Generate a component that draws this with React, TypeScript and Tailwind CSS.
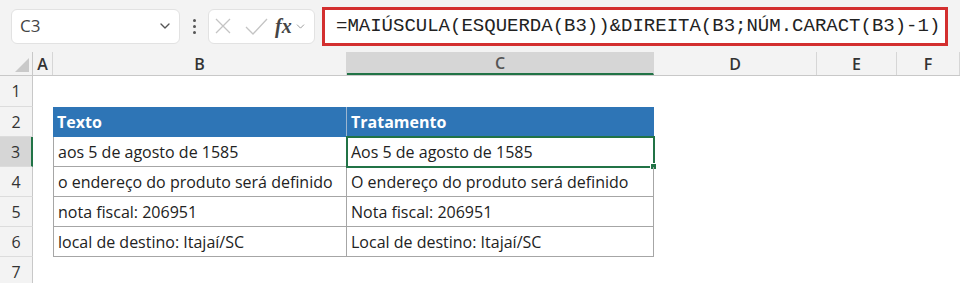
import { ChevronDown } from 'lucide-react';

const cols = [
  { key: 'A', w: 'w-[20px]' },
  { key: 'B', w: 'w-[294px]' },
  { key: 'C', w: 'w-[307px]' },
  { key: 'D', w: 'w-[163px]' },
  { key: 'E', w: 'w-[80px]' },
  { key: 'F', w: 'flex-1' },
];

const rows = [
  ['aos 5 de agosto de 1585', 'Aos 5 de agosto de 1585'],
  ['o endereço do produto será definido', 'O endereço do produto será definido'],
  ['nota fiscal: 206951', 'Nota fiscal: 206951'],
  ['local de destino: Itajaí/SC', 'Local de destino: Itajaí/SC'],
];

const cellFont = { fontFamily: '"Open Sans", "Noto Sans", sans-serif' };

function RowHeader({ n, h, active }: { n: number; h: string; active?: boolean }) {
  return (
    <div
      className={`w-[33px] ${h} flex items-center justify-center border-b border-[#dcdcdc] text-[16px] text-[#333] ${
        active ? 'bg-[#d6d6d6] border-r-2 border-r-[#217346]' : 'bg-[#f3f3f3] border-r border-r-[#c8c8c8]'
      }`}
    >
      {n}
    </div>
  );
}

export default function App() {
  return (
    <div className="w-[960px] h-[283px] overflow-hidden bg-white" style={cellFont}>
      {/* Formula bar */}
      <div className="h-[52px] bg-[#f3f3f3] flex items-center pl-[11px] pr-[12px]">
        <div className="w-[169px] h-[35px] bg-white border border-[#e2e2e2] rounded-[6px] flex items-center justify-between pl-[8px] pr-[6px]">
          <span className="text-[17px] text-[#444]">C3</span>
          <ChevronDown size={16} strokeWidth={2} className="text-[#555]" />
        </div>
        <div className="w-[28px] flex flex-col items-center gap-[3px]">
          <span className="w-[3px] h-[3px] bg-[#555] rounded-full" />
          <span className="w-[3px] h-[3px] bg-[#555] rounded-full" />
          <span className="w-[3px] h-[3px] bg-[#555] rounded-full" />
        </div>
        <div className="w-[107px] h-[35px] bg-white border border-[#e2e2e2] rounded-[6px] flex items-center pl-[6px]">
          <svg width="16" height="16" viewBox="0 0 16 16" className="text-[#c4c4c4]">
            <path d="M1 1L15 15M15 1L1 15" stroke="currentColor" strokeWidth="1.3" fill="none" />
          </svg>
          <svg width="23" height="17" viewBox="0 0 23 17" className="ml-[14px] text-[#c4c4c4]">
            <path d="M1 9L8 16L22 1" stroke="currentColor" strokeWidth="1.3" fill="none" />
          </svg>
          <span
            className="ml-[7px] text-[20px] italic font-bold text-[#444]"
            style={{ fontFamily: '"Liberation Serif", serif' }}
          >
            fx
          </span>
          <ChevronDown size={13} strokeWidth={1.5} className="text-[#888] ml-[2px]" />
        </div>
        <div className="ml-[7px] flex-1 h-[39px] bg-white border-[3px] border-[#d32f2f] flex items-center pl-[11px]">
          <span
            className="text-[19px] text-[#222]"
            style={{ fontFamily: '"Liberation Mono", monospace' }}
          >
            =MAIÚSCULA(ESQUERDA(B3))&amp;DIREITA(B3;NÚM.CARACT(B3)-1)
          </span>
        </div>
      </div>

      {/* Column headers */}
      <div className="flex h-[24px] bg-[#f3f3f3] border-b border-[#c8c8c8]">
        <div className="w-[33px] border-r border-[#c8c8c8] flex items-end justify-end p-[3px]">
          <div className="w-0 h-0 border-l-[14px] border-l-transparent border-b-[14px] border-b-[#c9c9c9]" />
        </div>
        {cols.map((c) => (
          <div
            key={c.key}
            className={`${c.w} shrink-0 flex items-center justify-center text-[16px] font-semibold text-[#333] border-r border-[#d6d6d6] ${
              c.key === 'C' ? 'bg-[#d6d6d6] border-b-2 border-b-[#217346] text-[#555]' : ''
            }`}
          >
            {c.key}
          </div>
        ))}
      </div>

      {/* Sheet body */}
      <div className="flex">
        <div className="flex flex-col">
          <RowHeader n={1} h="h-[31px]" />
          <RowHeader n={2} h="h-[30px]" />
          <RowHeader n={3} h="h-[30px]" active />
          <RowHeader n={4} h="h-[30px]" />
          <RowHeader n={5} h="h-[30px]" />
          <RowHeader n={6} h="h-[30px]" />
          <RowHeader n={7} h="h-[30px]" />
        </div>
        <div className="flex flex-col pl-[20px] pt-[31px]">
          <div className="flex h-[30px] bg-[#2e75b6] text-white font-bold text-[16px]">
            <div className="w-[294px] flex items-center px-[4px] border-r border-[#9cb6d0]">Texto</div>
            <div className="w-[307px] flex items-center px-[4px]">Tratamento</div>
          </div>
          {rows.map((r, i) => (
            <div key={i} className="flex h-[30px] text-[16px] text-[#222]">
              <div className="w-[294px] flex items-center px-[4px] border-l border-b border-r border-[#a6a6a6]">
                {r[0]}
              </div>
              <div
                className={`relative w-[307px] flex items-center px-[4px] border-b border-r border-[#a6a6a6] ${
                  i === 0 ? 'outline-2 -outline-offset-1 outline-[#217346]' : ''
                }`}
              >
                {r[1]}
                {i === 0 && (
                  <span className="absolute -right-[4px] -bottom-[4px] w-[7px] h-[7px] bg-[#217346] border border-white" />
                )}
              </div>
            </div>
          ))}
        </div>
      </div>
    </div>
  );
}
